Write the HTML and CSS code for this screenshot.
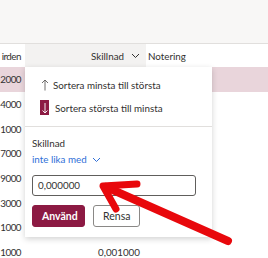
FILE: index.html
```html
<!DOCTYPE html>
<html lang="sv">
<head>
  <meta charset="UTF-8">
  <title>Skillnad filter</title>
  <link rel="stylesheet" href="styles.css">
</head>
<body>

  <div class="toolbar"></div>

  <div class="grid">
    <div class="row head">
      <div class="cell c1">irden</div>
      <div class="cell c2 active">Skillnad
        <svg class="chev" width="9" height="6" viewBox="0 0 9 6"><path d="M1 1l3.5 3.5L8 1" fill="none" stroke="#323130" stroke-width="1"/></svg>
      </div>
      <div class="cell c3 note">Notering</div>
    </div>
    <div class="row selected">
      <div class="cell c1">2000</div>
      <div class="cell c2"></div>
      <div class="cell c3"></div>
    </div>
    <div class="row"><div class="cell c1">4000</div><div class="cell c2"></div><div class="cell c3"></div></div>
    <div class="row"><div class="cell c1">1000</div><div class="cell c2"></div><div class="cell c3"></div></div>
    <div class="row"><div class="cell c1">7000</div><div class="cell c2"></div><div class="cell c3"></div></div>
    <div class="row"><div class="cell c1">9000</div><div class="cell c2"></div><div class="cell c3"></div></div>
    <div class="row"><div class="cell c1">3000</div><div class="cell c2"></div><div class="cell c3"></div></div>
    <div class="row"><div class="cell c1">1000</div><div class="cell c2"></div><div class="cell c3"></div></div>
    <div class="row"><div class="cell c1">1000</div><div class="cell c2">0,001000</div><div class="cell c3"></div></div>
  </div>

  <!-- column filter menu -->
  <div class="menu">
    <div class="menu-item">
      <span class="icon">
        <svg width="8" height="12" viewBox="0 0 8 12"><path d="M4 11.5V1M1 4l3-3 3 3" fill="none" stroke="#605e5c" stroke-width="0.9"/></svg>
      </span>
      <span>Sortera minsta till största</span>
    </div>
    <div class="menu-item">
      <span class="icon on">
        <svg width="8" height="12" viewBox="0 0 8 12"><path d="M4 1v10M1.5 8.5L4 11l2.5-2.5" fill="none" stroke="#fff" stroke-width="0.9"/></svg>
      </span>
      <span class="txt2">Sortera största till minsta</span>
    </div>
    <div class="divider"></div>
    <div class="filter">
      <div class="label">Skillnad</div>
      <div class="op">inte lika med
        <svg width="9" height="6" viewBox="0 0 9 6"><path d="M1 1l3.5 3.5L8 1" fill="none" stroke="#2f6fd8" stroke-width="1"/></svg>
      </div>
      <div class="input">0,000000</div>
      <div class="buttons">
        <button class="btn primary">Använd</button>
        <button class="btn">Rensa</button>
      </div>
    </div>
  </div>

  <svg class="arrow" width="268" height="258" viewBox="0 0 268 258">
    <path d="M228 241L106 187" stroke="#e8080c" stroke-width="8" stroke-linecap="round" fill="none"/>
    <path d="M137 184L103 186L116 209" stroke="#e8080c" stroke-width="7" stroke-linecap="round" stroke-linejoin="round" fill="none"/>
  </svg>

</body>
</html>
```

FILE: styles.css
```css
body {
  margin: 0;
  font-family: 'Lato', 'Noto Sans', sans-serif;
  font-size: 9.8px;
  color: #323130;
  background: #fff;
  width: 268px;
  height: 258px;
  overflow: hidden;
  position: relative;
}

.toolbar {
  height: 43px;
  background: #f8f7f6;
  border-bottom: 1px solid #e1dfdd;
}

.row {
  display: flex;
  height: 24.7px;
}

.row.head {
  height: 23px;
}

.row.selected {
  background: #e9d5db;
}

.cell {
  display: flex;
  align-items: center;
  justify-content: flex-end;
  white-space: nowrap;
  padding-right: 6px;
}

.c1 {
  width: 21px;
  padding-right: 4px;
  letter-spacing: -0.5px;
}

.c2 {
  width: 115px;
}

.c3 {
  flex: 1;
  justify-content: flex-start;
  padding-left: 2px;
}

.head .active {
  background: #f3f2f1;
}

.head .note {
  background: #fff;
}

.chev {
  margin-left: 7px;
}

.menu {
  position: absolute;
  left: 25px;
  top: 67px;
  width: 187px;
  height: 170px;
  background: #fff;
  box-shadow: 0 2px 6px rgba(0, 0, 0, 0.18);
  padding-top: 6px;
  box-sizing: border-box;
}

.menu-item {
  display: flex;
  align-items: center;
  height: 23px;
  padding-left: 15px;
  gap: 4px;
}

.icon {
  width: 9px;
  height: 15px;
  display: flex;
  align-items: center;
  justify-content: center;
}

.icon.on {
  background: #8c1a43;
}

.txt2 {
  margin-left: 2px;
}

.divider {
  height: 1px;
  background: #e1dfdd;
  margin-top: 7px;
}

.filter {
  padding: 8px 7px 0;
}

.label {
  height: 16px;
  line-height: 16px;
}

.op {
  color: #2f6fd8;
  height: 17px;
  line-height: 17px;
}

.op svg {
  margin-left: 3px;
}

.input {
  margin-top: 7px;
  height: 21px;
  width: 164px;
  box-sizing: border-box;
  border: 1px solid #605e5c;
  border-radius: 3px;
  padding-left: 5px;
  line-height: 19px;
}

.buttons {
  display: flex;
  gap: 8px;
  margin-top: 9px;
}

.btn {
  height: 22px;
  font-family: inherit;
  font-size: 10.5px;
  color: #323130;
  background: #fff;
  border: 1px solid #8a8886;
  border-radius: 3px;
  padding: 0 9px;
}

.btn.primary {
  background: #8c1a43;
  border-color: #8c1a43;
  color: #fff;
  font-weight: bold;
  width: 53px;
}

.arrow {
  position: absolute;
  left: 0;
  top: 0;
  pointer-events: none;
}
```
